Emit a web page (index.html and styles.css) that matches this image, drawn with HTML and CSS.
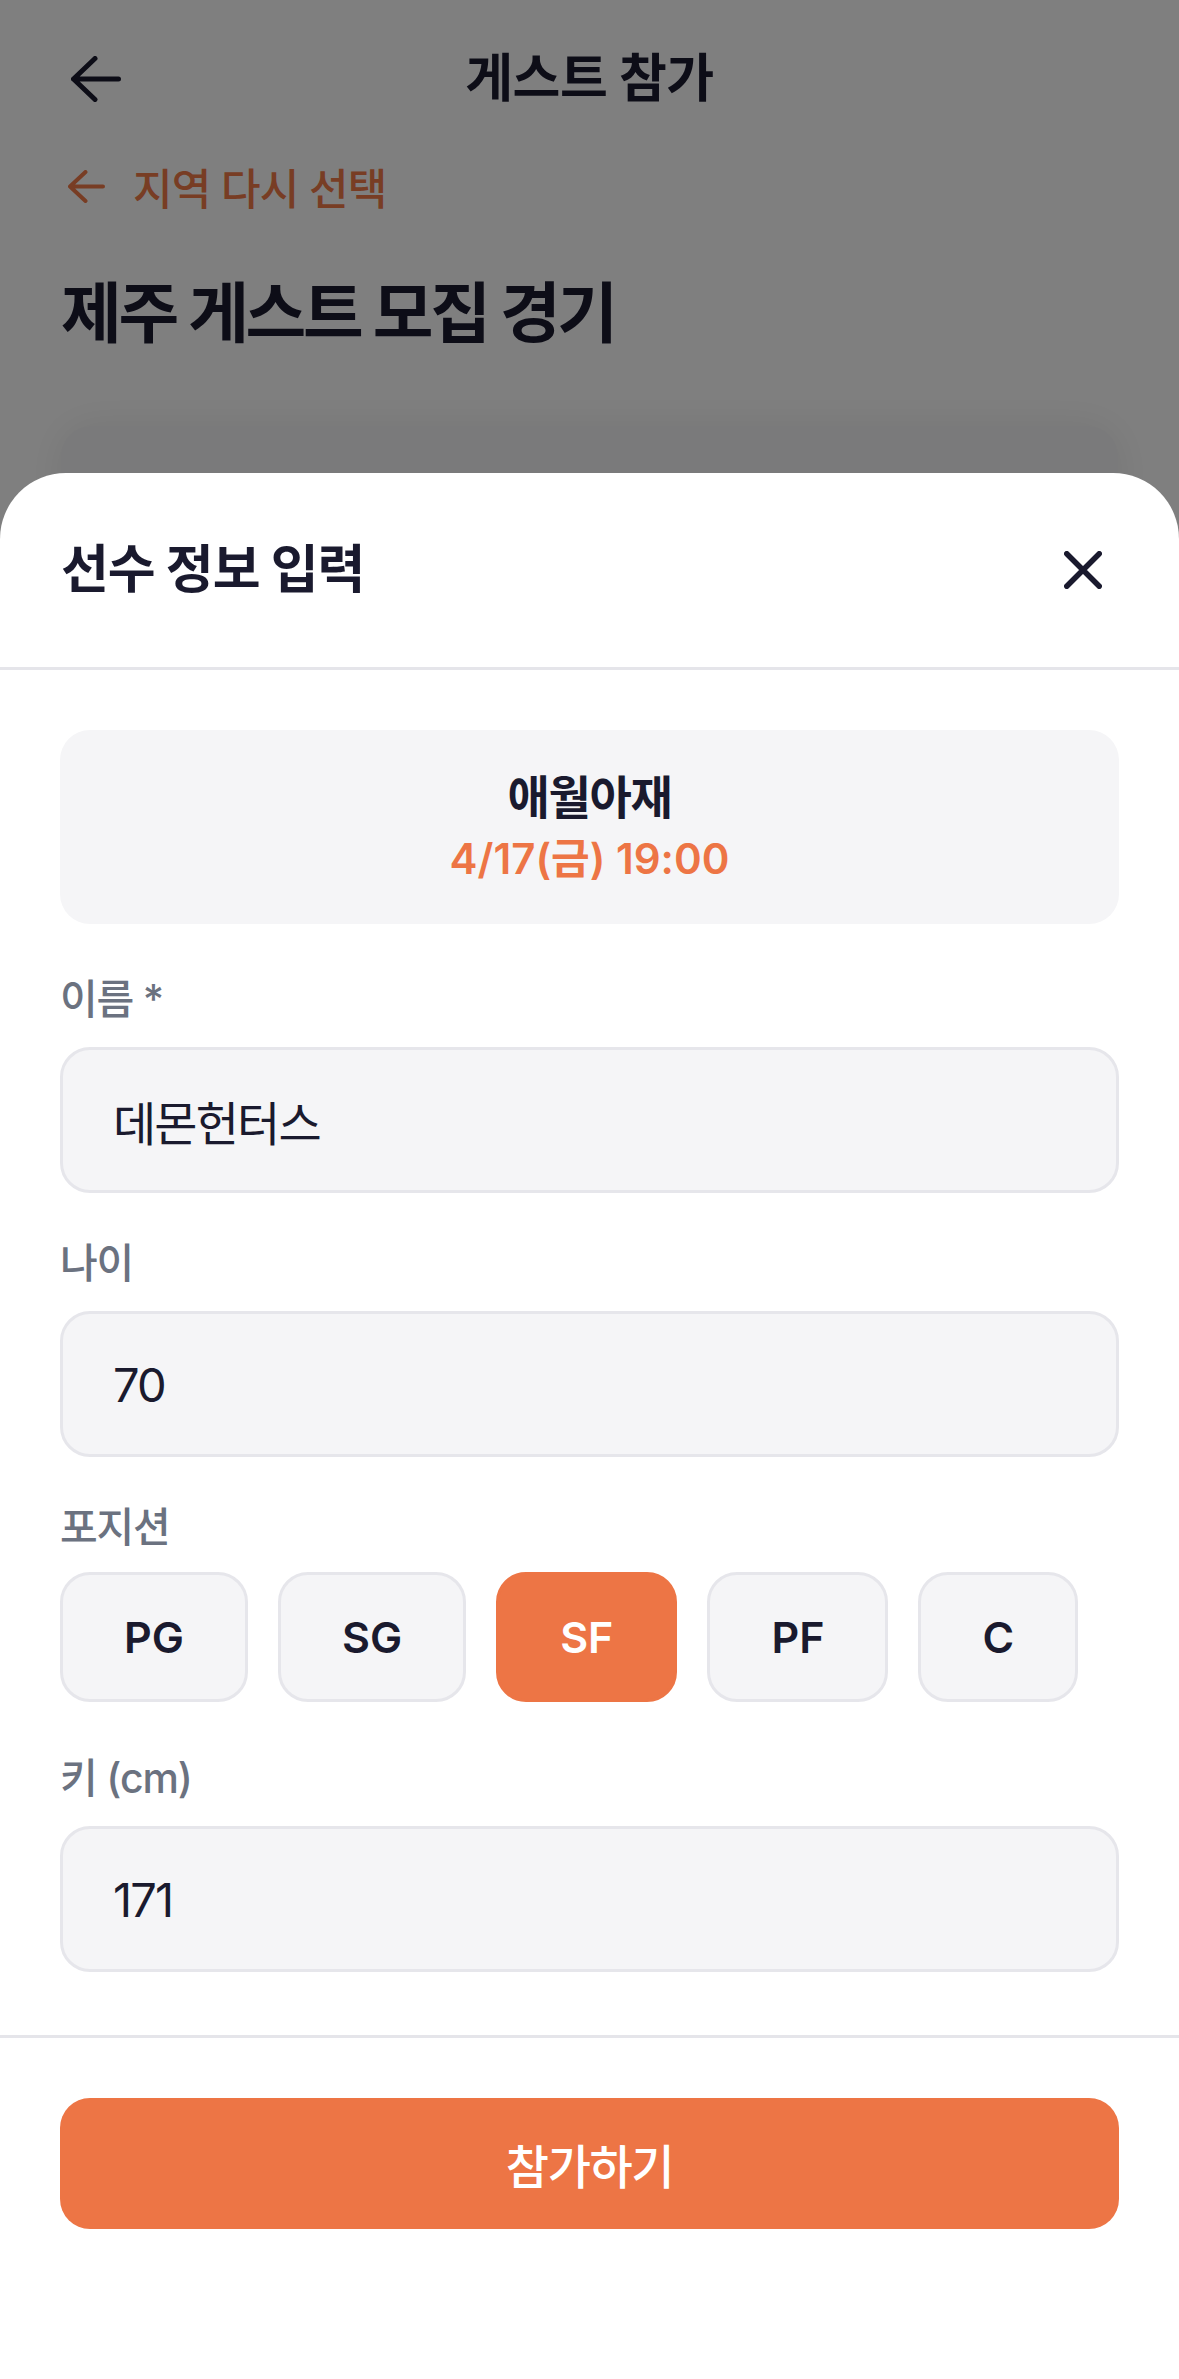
FILE: index.html
```html
<!DOCTYPE html>
<html lang="ko">
<head>
<meta charset="utf-8">
<title>게스트 참가</title>
<link rel="stylesheet" href="styles.css">
</head>
<body>
<div class="screen">
  <main class="page">
    <header class="nav">
      <button class="nav-back" type="button" aria-label="뒤로">
        <svg width="50" height="46" viewBox="0 0 50 46"><path d="M47.5 23H2.5M24 2.5L2.5 23L24 43.5"/></svg>
      </button>
      <h1 class="nav-title">게스트 참가</h1>
      <span class="nav-spacer"></span>
    </header>
    <a class="region-link">
      <svg width="37" height="33" viewBox="0 0 37 33"><path d="M35 16.5H2M17.5 2L2 16.5L17.5 31"/></svg>
      <span>지역 다시 선택</span>
    </a>
    <h2 class="page-title">제주 게스트 모집 경기</h2>
    <section class="game-card"></section>
  </main>

  <div class="dim"></div>

  <section class="sheet">
    <header class="sheet-header">
      <h3 class="sheet-title">선수 정보 입력</h3>
      <button class="sheet-close" type="button" aria-label="닫기">
        <svg width="38" height="38" viewBox="0 0 38 38"><path d="M2.75 2.75L35.25 35.25M35.25 2.75L2.75 35.25"/></svg>
      </button>
    </header>

    <div class="sheet-body">
      <div class="match-card">
        <div class="match-name">애월아재</div>
        <div class="match-time">4/17(금) 19:00</div>
      </div>

      <div class="field">
        <label class="field-label">이름 *</label>
        <input class="field-input" type="text" value="데몬헌터스">
      </div>

      <div class="field">
        <label class="field-label">나이</label>
        <input class="field-input" type="text" value="70">
      </div>

      <div class="field field-positions">
        <label class="field-label">포지션</label>
        <div class="positions">
          <button class="pos" type="button">PG</button>
          <button class="pos" type="button">SG</button>
          <button class="pos is-active" type="button">SF</button>
          <button class="pos" type="button">PF</button>
          <button class="pos" type="button">C</button>
        </div>
      </div>

      <div class="field">
        <label class="field-label">키 (cm)</label>
        <input class="field-input" type="text" value="171">
      </div>
    </div>

    <footer class="sheet-footer">
      <button class="submit" type="button">참가하기</button>
    </footer>
  </section>
</div>
</body>
</html>
```

FILE: styles.css
```css
* { box-sizing: border-box; margin: 0; padding: 0; }
html, body { background: #fff; }
body {
  font-family: Inter, "Noto Sans CJK KR", sans-serif;
  color: #1a1a2e;
}
button, input { font-family: inherit; }

.screen {
  position: relative;
  width: 1179px;
  height: 2379px;
  overflow: hidden;
  background: #fff;
}

/* background page */
.page { display: flex; flex-direction: column; }
.nav {
  height: 158px;
  display: grid;
  grid-template-columns: 1fr auto 1fr;
  align-items: center;
  padding: 0 71px;
}
.nav-back {
  display: flex;
  width: 50px;
  background: none;
  border: 0;
}
.nav-back path {
  fill: none;
  stroke: #1a1a2e;
  stroke-width: 5;
  stroke-linecap: round;
  stroke-linejoin: round;
}
.nav-title {
  font-size: 52px;
  font-weight: 700;
  line-height: 1;
  letter-spacing: -0.01em;
}
.region-link {
  display: flex;
  align-items: center;
  gap: 28px;
  height: 56px;
  padding-left: 68px;
  color: #F07A48;
  font-size: 43px;
  font-weight: 500;
  letter-spacing: -0.02em;
}
.region-link path {
  fill: none;
  stroke: #F07A48;
  stroke-width: 4;
  stroke-linecap: round;
  stroke-linejoin: round;
}
.page-title {
  margin-top: 59px;
  padding-left: 61px;
  font-size: 66px;
  line-height: 80px;
  font-weight: 700;
  letter-spacing: -0.05em;
}
.game-card {
  margin: 73px 61px 0;
  height: 640px;
  border-radius: 30px;
  background: #f5f5f7;
  box-shadow: 0 0 40px rgba(0, 0, 0, 0.08);
}

.dim {
  position: absolute;
  inset: 0;
  background: rgba(0, 0, 0, 0.5);
}

/* bottom sheet */
.sheet {
  position: absolute;
  left: 0;
  right: 0;
  bottom: 0;
  display: flex;
  flex-direction: column;
  background: #fff;
  border-radius: 66px 66px 0 0;
}
.sheet-header {
  height: 197px;
  display: flex;
  align-items: center;
  justify-content: space-between;
  padding: 0 77px 0 61px;
  border-bottom: 3px solid #e5e5ea;
}
.sheet-title {
  font-size: 52px;
  font-weight: 700;
  line-height: 1;
  letter-spacing: -0.02em;
}
.sheet-close {
  display: flex;
  background: none;
  border: 0;
}
.sheet-close path {
  fill: none;
  stroke: #1a1a2e;
  stroke-width: 5.5;
  stroke-linecap: round;
}

.sheet-body {
  display: flex;
  flex-direction: column;
  gap: 44px;
  padding: 60px 60px 63px;
  border-bottom: 3px solid #e5e5ea;
}
.match-card {
  margin-bottom: 5px;
  padding: 42px 0 40px;
  border-radius: 30px;
  background: #f5f5f7;
  text-align: center;
}
.match-name {
  font-size: 46px;
  line-height: 50px;
  font-weight: 700;
  letter-spacing: -0.03em;
}
.match-time {
  margin-top: 12px;
  font-size: 42px;
  line-height: 50px;
  font-weight: 600;
  color: #ED7545;
}

.field { display: flex; flex-direction: column; }
.field-label {
  margin-bottom: 22px;
  font-size: 41px;
  line-height: 52px;
  font-weight: 500;
  color: #6b7280;
  letter-spacing: -0.03em;
}
.field-positions { margin-bottom: 6px; }
.field-positions .field-label { margin-bottom: 19px; }
.field-input {
  width: 100%;
  height: 146px;
  padding: 0 50px;
  border: 3px solid #e6e6eb;
  border-radius: 30px;
  background: #f5f5f7;
  color: #1a1a2e;
  font-size: 47px;
  font-weight: 400;
  letter-spacing: -0.04em;
  outline: none;
}

.positions { display: flex; gap: 30px; }
.pos {
  height: 130px;
  padding: 0 61px;
  border: 3px solid #e6e6eb;
  border-radius: 30px;
  background: #f5f5f7;
  color: #1a1a2e;
  font-size: 43px;
  font-weight: 600;
}
.pos.is-active {
  background: #ED7545;
  border-color: #ED7545;
  color: #fff;
}

.sheet-footer { padding: 60px 60px 150px; }
.submit {
  width: 100%;
  height: 131px;
  border: 0;
  border-radius: 30px;
  background: #ED7545;
  color: #fff;
  font-size: 47px;
  font-weight: 500;
  letter-spacing: -0.03em;
}
```
